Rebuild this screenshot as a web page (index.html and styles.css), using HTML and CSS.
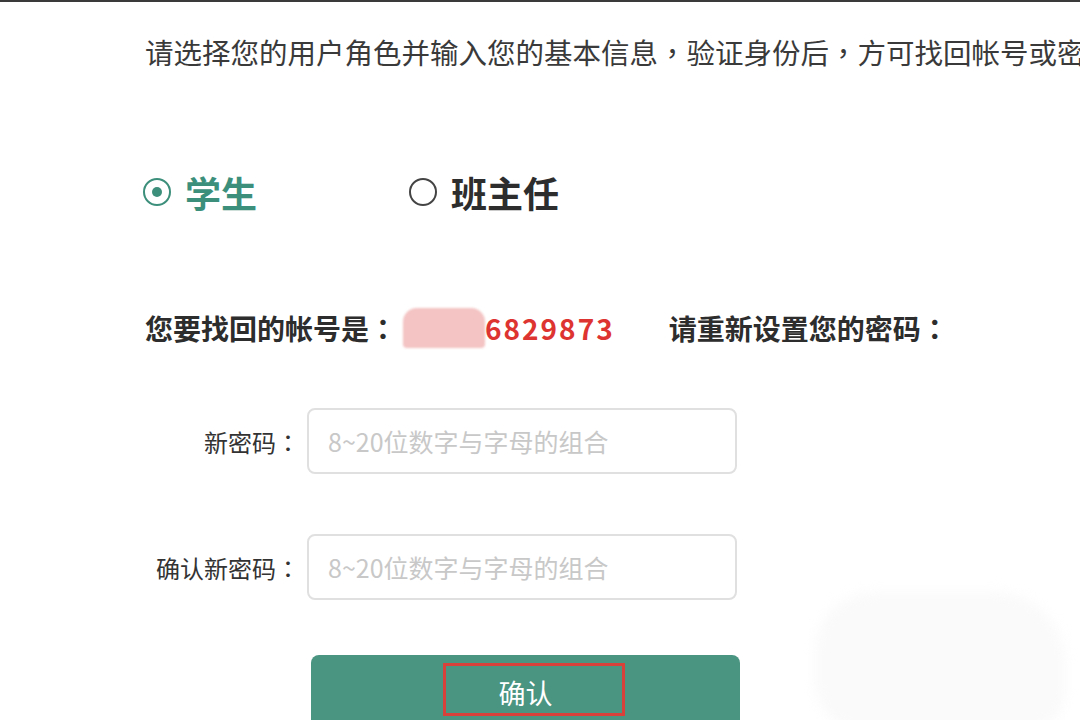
FILE: index.html
```html
<!DOCTYPE html>
<html lang="zh-CN">
<head>
  <meta charset="UTF-8" />
  <title>找回密码</title>
  <link rel="stylesheet" href="styles.css">
</head>
<body>
  <div class="page">
    <p class="intro">请选择您的用户角色并输入您的基本信息<span class="punct" lang="zh-TW">，</span>验证身份后<span class="punct" lang="zh-TW">，</span>方可找回帐号或密码</p>

    <div class="roles">
      <label class="role checked"><span class="radio"></span>学生</label>
      <label class="role"><span class="radio"></span>班主任</label>
    </div>

    <div class="account">
      <span>您要找回的帐号是<span class="punct" lang="zh-TW">：</span></span>
      <span class="masked"></span>
      <span class="account-no">6829873</span>
      <span class="reset-tip">请重新设置您的密码<span class="punct" lang="zh-TW">：</span></span>
    </div>

    <div class="form">
      <div class="field">
        <span class="field-label">新密码<span class="punct" lang="zh-TW">：</span></span>
        <input class="field-input" type="password" placeholder="8~20位数字与字母的组合">
      </div>
      <div class="field">
        <span class="field-label">确认新密码<span class="punct" lang="zh-TW">：</span></span>
        <input class="field-input" type="password" placeholder="8~20位数字与字母的组合">
      </div>
      <div class="submit">
        <span class="submit-text">确认</span>
        <span class="mark"></span>
      </div>
    </div>

    <div class="smudge"></div>
  </div>
</body>
</html>
```

FILE: styles.css
```css
* {
  box-sizing: border-box;
}

body {
  margin: 0;
  background: #fff;
  font-family: "Noto Sans CJK SC", "Noto Sans", sans-serif;
  color: #333;
  overflow: hidden;
  height: 720px;
}

/* full-width punctuation sits centred in its box */
.punct {
  font-family: "Noto Sans CJK TC", sans-serif;
}

.page {
  position: relative;
  height: 720px;
  border-top: 2px solid #3a3a3a;
  padding: 30px 0 0 145px;
}

.intro {
  margin: 0;
  height: 40px;
  line-height: 40px;
  font-size: 28.5px;
  white-space: nowrap;
  color: #3a3a3a;
}

/* role switch */
.roles {
  margin-top: 96px;
  height: 48px;
  display: flex;
  align-items: center;
  gap: 154px;
}

.role {
  display: flex;
  align-items: center;
  gap: 14px;
  font-size: 36px;
  font-weight: bold;
  color: #2d2d2d;
}

.radio {
  width: 28px;
  height: 28px;
  margin-left: -2px;
  border: 2.5px solid #444;
  border-radius: 50%;
  display: flex;
  align-items: center;
  justify-content: center;
}

.role.checked {
  color: #3c8f7b;
}

.role.checked .radio {
  border-color: #3c8f7b;
}

.role.checked .radio::after {
  content: "";
  width: 10px;
  height: 10px;
  border-radius: 50%;
  background: #3c8f7b;
}

/* account line */
.account {
  margin-top: 92px;
  height: 40px;
  display: flex;
  align-items: center;
  font-size: 28px;
  font-weight: bold;
  color: #2d2d2d;
}

.masked {
  width: 82px;
  height: 40px;
  margin-left: 6px;
  background: #f4c3c3;
  border-radius: 14px 14px 4px 4px;
  filter: blur(1px);
}

.account-no {
  color: #de3431;
  letter-spacing: 2px;
}

.reset-tip {
  margin-left: 54px;
}

/* password form */
.form {
  margin-top: 60px;
}

.field {
  display: flex;
  align-items: center;
  gap: 7px;
  margin-bottom: 60px;
}

.field-label {
  width: 155px;
  text-align: right;
  font-size: 24px;
  color: #333;
}

.field-input {
  width: 430px;
  height: 66px;
  border: 2px solid #e0e0e0;
  border-radius: 8px;
  padding: 0 19px;
  font-family: inherit;
  font-size: 25px;
  outline: none;
}

.field-input::placeholder {
  color: #c8c8c8;
}

.submit {
  position: relative;
  margin: -5px 0 0 166px;
  width: 429px;
  height: 74px;
  border-radius: 8px;
  background: #4a9482;
  display: flex;
  align-items: center;
  justify-content: center;
}

.submit-text {
  font-size: 27px;
  color: #fff;
}

/* annotation box drawn over the button */
.mark {
  position: absolute;
  left: 132px;
  top: 8px;
  width: 182px;
  height: 53px;
  border: 3px solid #d8403a;
}

.smudge {
  position: absolute;
  left: 815px;
  top: 590px;
  width: 250px;
  height: 140px;
  border-radius: 60px 70px 40px 50px;
  background: #fafafa;
  filter: blur(6px);
}
```
